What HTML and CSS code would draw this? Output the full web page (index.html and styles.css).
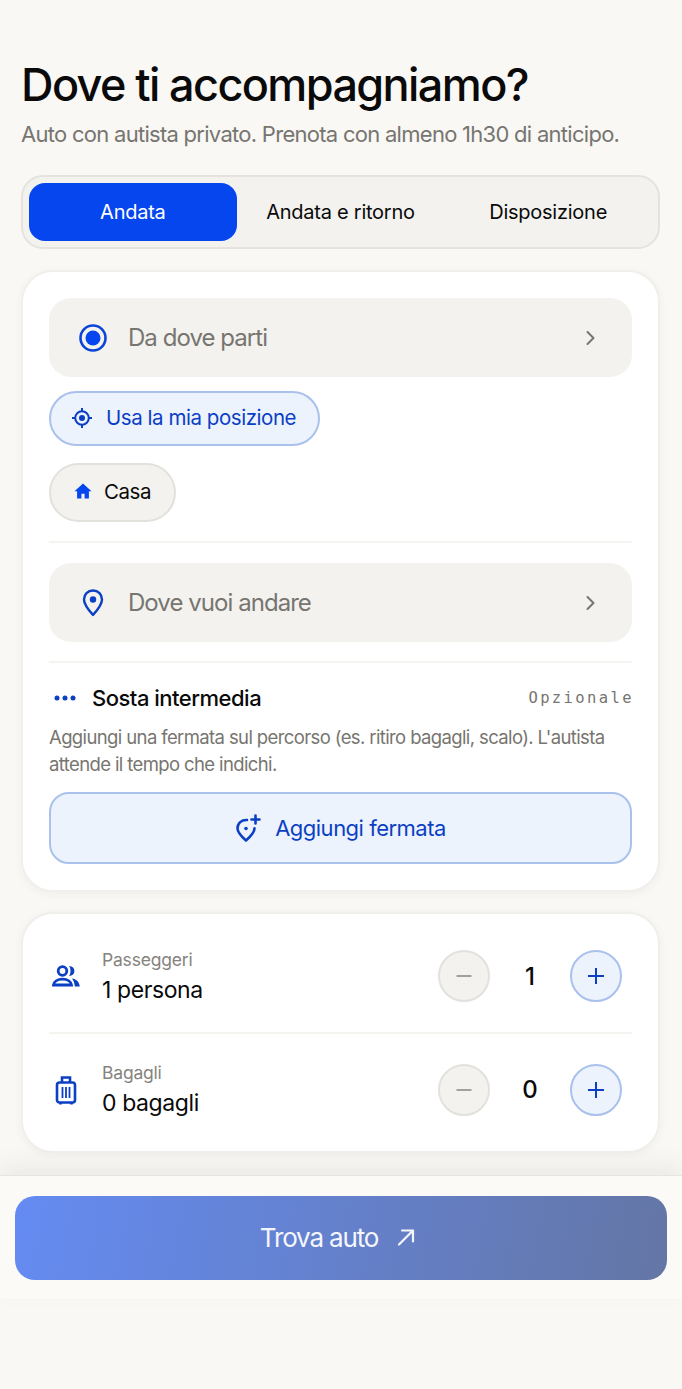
FILE: index.html
```html
<!DOCTYPE html>
<html lang="it">
<head>
  <meta charset="UTF-8">
  <meta name="viewport" content="width=device-width, initial-scale=1.0">
  <title>Dove ti accompagniamo?</title>
  <link rel="stylesheet" href="styles.css">
</head>
<body>
  <main class="content">
    <h1>Dove ti accompagniamo?</h1>
    <p class="subtitle">Auto con autista privato. Prenota con almeno 1h30 di anticipo.</p>

    <div class="tabs">
      <button class="tab tab-active">Andata</button>
      <button class="tab">Andata e ritorno</button>
      <button class="tab">Disposizione</button>
    </div>

    <section class="card route-card">
      <div class="field">
        <svg class="field-icon" width="30" height="30" viewBox="0 0 30 30"><circle cx="15" cy="15" r="12.5" fill="none" stroke="#0b45d8" stroke-width="2.6"/><circle cx="15" cy="15" r="7.5" fill="#0546ee"/></svg>
        <span class="field-text">Da dove parti</span>
        <svg class="chevron" width="12" height="16" viewBox="0 0 12 16"><path d="M2.5 2l6 6-6 6" fill="none" stroke="#77756f" stroke-width="2" stroke-linecap="round" stroke-linejoin="round"/></svg>
      </div>

      <button class="chip chip-blue">
        <svg width="22" height="22" viewBox="0 0 22 22" fill="none" stroke="#0b3fc4" stroke-width="2"><circle cx="11" cy="11" r="6.8"/><circle cx="11" cy="11" r="3" fill="#0b3fc4" stroke="none"/><path d="M11 1v3M11 18v3M1 11h3M18 11h3"/></svg>
        Usa la mia posizione
      </button>

      <button class="chip chip-grey">
        <svg width="18" height="16" viewBox="0 0 18 16"><path d="M9 .5L.5 8.3h2.6V15.5h4.3v-4.8h3.2v4.8h4.3V8.3h2.6z" fill="#0546ee"/></svg>
        Casa
      </button>

      <hr class="divider">

      <div class="field">
        <svg class="field-icon" width="30" height="30" viewBox="0 0 30 30"><path d="M15 2.5c-5.3 0-9 4-9 8.9 0 5.3 4.6 10.600 9 15.500 4.400-4.900 9-10.200 9-15.500 0-4.900-3.700-8.900-9-8.900z" fill="none" stroke="#0b3fc4" stroke-width="2.4" stroke-linejoin="round"/><circle cx="15" cy="11.500" r="3.200" fill="#0b3fc4"/></svg>
        <span class="field-text">Dove vuoi andare</span>
        <svg class="chevron" width="12" height="16" viewBox="0 0 12 16"><path d="M2.5 2l6 6-6 6" fill="none" stroke="#77756f" stroke-width="2" stroke-linecap="round" stroke-linejoin="round"/></svg>
      </div>

      <hr class="divider">

      <div class="stop-head">
        <svg class="dots" width="22" height="6" viewBox="0 0 22 6"><circle cx="3" cy="3" r="2.500" fill="#0b3fc4"/><circle cx="11" cy="3" r="2.500" fill="#0b3fc4"/><circle cx="19" cy="3" r="2.500" fill="#0b3fc4"/></svg>
        <span class="stop-title">Sosta intermedia</span>
        <span class="stop-tag">Opzionale</span>
      </div>
      <p class="stop-desc">Aggiungi una fermata sul percorso (es. ritiro bagagli, scalo). L'autista attende il tempo che indichi.</p>
      <button class="add-stop">
        <svg width="26" height="28" viewBox="0 0 26 28" fill="none" stroke="#0b3fc4" stroke-width="2.600" stroke-linecap="round" stroke-linejoin="round"><path d="M12 6c-5.500-.4-9.500 3.300-9.500 8.300 0 4.400 4 8.300 8.500 12.200 4.500-3.900 8.500-7.800 8.500-12.200"/><circle cx="11" cy="14.500" r="1.800" fill="#0b3fc4" stroke="none"/><path d="M20.500 1.500v8M16.500 5.500h8"/></svg>
        Aggiungi fermata
      </button>
    </section>

    <section class="card counters-card">
      <div class="counter-row">
        <svg class="counter-icon" width="28" height="22" viewBox="0 0 28 22" fill="none" stroke="#0b3fc4" stroke-width="2.800"><circle cx="10.500" cy="6" r="4.300"/><path d="M17 1c3.600.2 5.400 2.300 5.400 5s-1.800 4.800-5.400 5c1-1.400 1.500-3.200 1.500-5s-.5-3.600-1.500-5z" fill="#0b3fc4" stroke="none"/><path d="M1.500 20c.4-3.400 3.900-5.800 9-5.800s8.600 2.400 9 5.800z"/><path d="M20 13.500c4 .5 7.200 2.900 7.800 8h-5c-.2-3.200-1.200-6-2.800-8z" fill="#0b3fc4" stroke="none"/></svg>
        <div class="counter-text">
          <span class="counter-label">Passeggeri</span>
          <span class="counter-value">1 persona</span>
        </div>
        <div class="stepper">
          <button class="step step-minus"><svg width="16" height="16" viewBox="0 0 16 16"><path d="M0.500 8h15" stroke="#a3a19b" stroke-width="2"/></svg></button>
          <span class="step-count">1</span>
          <button class="step step-plus"><svg width="16" height="16" viewBox="0 0 16 16"><path d="M0 8h16M8 0v16" stroke="#0b3fc4" stroke-width="2"/></svg></button>
        </div>
      </div>
      <hr class="divider">
      <div class="counter-row">
        <svg class="counter-icon" width="28" height="30" viewBox="0 0 28 30" fill="none" stroke="#0b3fc4" stroke-width="2.600"><rect x="5" y="7.500" width="18" height="20" rx="2.500"/><path d="M10 7.500V2.500h8v5"/><path d="M10.500 12v11M14 12v11M17.500 12v11" stroke-width="1.800"/><path d="M8.500 28v1.500M19.500 28v1.500"/></svg>
        <div class="counter-text">
          <span class="counter-label">Bagagli</span>
          <span class="counter-value">0 bagagli</span>
        </div>
        <div class="stepper">
          <button class="step step-minus"><svg width="16" height="16" viewBox="0 0 16 16"><path d="M0.500 8h15" stroke="#a3a19b" stroke-width="2"/></svg></button>
          <span class="step-count">0</span>
          <button class="step step-plus"><svg width="16" height="16" viewBox="0 0 16 16"><path d="M0 8h16M8 0v16" stroke="#0b3fc4" stroke-width="2"/></svg></button>
        </div>
      </div>
    </section>
  </main>

  <footer class="footer">
    <button class="cta">
      Trova auto
      <svg width="20" height="20" viewBox="0 0 20 20" fill="none" stroke="#f4f6fd" stroke-width="2.200" stroke-linecap="round" stroke-linejoin="round"><path d="M3 17.500L17 3.500M6 3.500h11v11"/></svg>
    </button>
  </footer>
</body>
</html>
```

FILE: styles.css
```css
* {
  box-sizing: border-box;
}

body {
  margin: 0;
  height: 1389px;
  overflow: hidden;
  background: #f9f8f5;
  color: #0a0a0a;
  font-family: 'Inter', 'Liberation Sans', sans-serif;
}

button {
  font-family: inherit;
  cursor: pointer;
}

.content {
  padding: 56px 22px 22px 21px;
}

h1 {
  margin: 0;
  font-size: 45px;
  line-height: 58px;
  font-weight: 500;
  letter-spacing: -1.6px;
}

.subtitle {
  margin: 5px 0 0;
  font-size: 22px;
  line-height: 30px;
  letter-spacing: -0.72px;
  color: #777570;
}

/* Tabs */
.tabs {
  display: grid;
  grid-template-columns: repeat(3, 1fr);
  margin-top: 26px;
  height: 74px;
  padding: 6px;
  background: #f3f2ef;
  border: 2px solid #e4e3de;
  border-radius: 22px;
}

.tab {
  border: none;
  background: none;
  font-size: 20px;
  letter-spacing: -0.25px;
  color: #0a0a0a;
}

.tab-active {
  background: #0546ee;
  border-radius: 16px;
  color: #fff;
}

/* Cards */
.card {
  background: #fff;
  border: 2px solid #f0efec;
  border-radius: 32px;
  padding: 26px 26px;
  box-shadow: 0 2px 8px rgba(60, 60, 50, 0.05);
}

.route-card {
  margin-top: 21px;
  height: 622px;
}

.field {
  display: flex;
  align-items: center;
  height: 79px;
  padding: 0 35px 0 29px;
  background: #f3f2ef;
  border-radius: 22px;
}

.field-icon {
  flex-shrink: 0;
}

.field-text {
  flex: 1;
  margin-left: 20px;
  padding-bottom: 1px;
  font-size: 24px;
  letter-spacing: -0.95px;
  color: #777570;
}

.chip {
  display: flex;
  align-items: center;
  border-radius: 30px;
  font-size: 20.5px;
  letter-spacing: -0.45px;
}

.chip-blue {
  gap: 13px;
  height: 55px;
  margin-top: 14px;
  padding: 0 22px 2px 20px;
  background: #edf3fd;
  border: 2px solid #a9c1ec;
  color: #0b3fc4;
}

.chip-grey {
  gap: 12px;
  height: 59px;
  margin-top: 17px;
  padding: 0 23px 3px;
  background: #f3f2ef;
  border: 2px solid #e2e1dc;
  color: #0a0a0a;
}

.divider {
  margin: 0;
  border: none;
  border-top: 2px solid #f5f4f1;
}

.chip-grey + .divider {
  margin: 19px 0 20px;
}

.field + .divider {
  margin: 19px 0 0;
}

.stop-head {
  display: flex;
  align-items: center;
  height: 34px;
  margin-top: 18px;
}

.dots {
  margin: 0 16px 0 5px;
}

.stop-title {
  flex: 1;
  font-size: 22px;
  font-weight: 500;
  letter-spacing: -0.5px;
}

.stop-tag {
  font-family: 'DejaVu Sans Mono', monospace;
  font-size: 15.5px;
  letter-spacing: 2.4px;
  margin-right: -2px;
  color: #77756f;
}

.stop-desc {
  margin: 9px 0 0;
  font-size: 18.5px;
  line-height: 27px;
  letter-spacing: -0.62px;
  color: #777570;
}

.add-stop {
  display: flex;
  align-items: center;
  justify-content: center;
  gap: 14px;
  width: 100%;
  height: 72px;
  margin-top: 14px;
  background: #edf3fd;
  border: 2px solid #a9c1ec;
  border-radius: 20px;
  font-size: 22px;
  letter-spacing: -0.5px;
  color: #0b3fc4;
}

/* Counters */
.counters-card {
  margin-top: 20px;
  height: 241px;
  padding: 0 26px;
}

.counter-row {
  display: flex;
  align-items: center;
  height: 118px;
  padding-top: 6px;
}

.counters-card .divider + .counter-row {
  padding-top: 0;
  height: 111px;
}

.counter-icon {
  flex-shrink: 0;
  margin-left: 3px;
}

.counter-text {
  flex: 1;
  display: flex;
  flex-direction: column;
  margin-left: 22px;
}

.counter-label {
  font-size: 17.5px;
  line-height: 24px;
  letter-spacing: -0.2px;
  color: #85837e;
}

.counter-value {
  margin-top: 3px;
  font-size: 23px;
  line-height: 30px;
  letter-spacing: -0.4px;
}

.stepper {
  display: flex;
  align-items: center;
  margin-right: 10px;
}

.step {
  display: flex;
  align-items: center;
  justify-content: center;
  width: 52px;
  height: 52px;
  padding: 0;
  border-radius: 50%;
}

.step-minus {
  background: #f3f2ef;
  border: 2px solid #e2e1dc;
}

.step-plus {
  background: #edf3fd;
  border: 2px solid #a9c1ec;
}

.step-count {
  width: 80px;
  text-align: center;
  font-size: 24px;
  font-weight: 500;
}

/* Footer */
.footer {
  height: 124px;
  padding: 20px 15px 0;
  background: #fbfaf7;
  border-top: 1px solid #e6e5e1;
  box-shadow: 0 -10px 22px rgba(60, 60, 50, 0.07);
}

.cta {
  display: flex;
  align-items: center;
  justify-content: center;
  gap: 18px;
  width: 100%;
  height: 84px;
  padding: 0 6px 2px 0;
  border: none;
  border-radius: 20px;
  background: linear-gradient(100deg, #648bf2 0%, #6476a5 100%);
  font-size: 26px;
  letter-spacing: -1.15px;
  color: #f4f6fd;
}
```
